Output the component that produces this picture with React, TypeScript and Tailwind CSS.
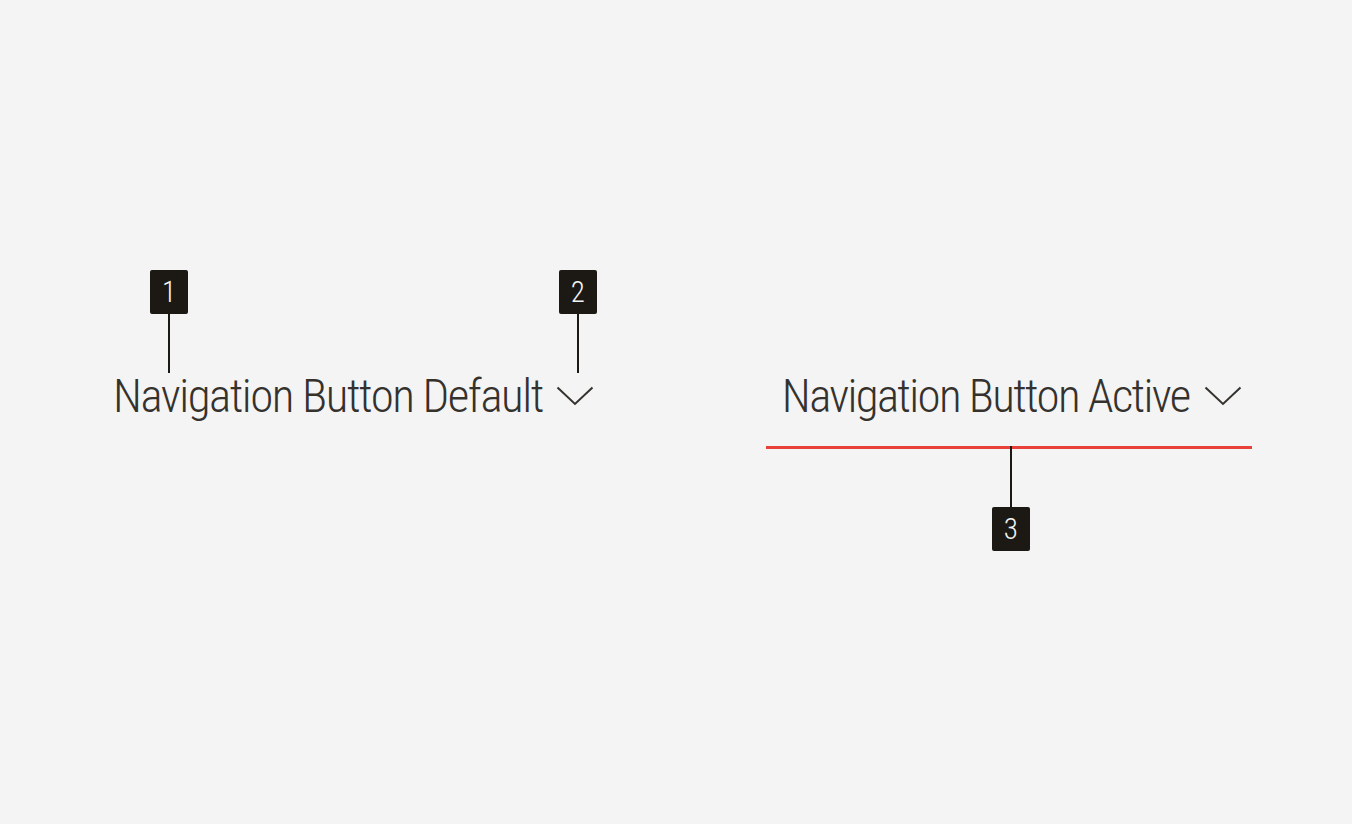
type MarkerProps = { n: string; down?: boolean; lineH: number };

// Numbered callout: dark square tag joined to the element by a thin stem
function Marker({ n, down, lineH }: MarkerProps) {
  const tag = (
    <div className="w-[38px] h-[44px] rounded-[2px] bg-[#1c1915] text-[#f4f4f4] flex items-center justify-center text-[29px] leading-none font-light [font-stretch:75%]">
      {n}
    </div>
  );
  const stem = <div className="w-[2px] bg-[#1c1915]" style={{ height: lineH }} />;
  return (
    <div className="flex flex-col items-center">
      {down ? (
        <>
          {stem}
          {tag}
        </>
      ) : (
        <>
          {tag}
          {stem}
        </>
      )}
    </div>
  );
}

function Chevron() {
  return (
    <svg width="38" height="20" viewBox="0 0 38 20" fill="none" className="shrink-0">
      <polyline points="1.5,1.5 19,18 36.5,1.5" stroke="#35322e" strokeWidth="2" />
    </svg>
  );
}

export default function App() {
  return (
    <div className="w-[1352px] h-[824px] bg-[#f4f4f4] font-['Roboto',sans-serif] text-[#35322e]">
      <div className="flex items-start pt-[368px]">
        {/* Default state */}
        <div className="relative ml-[113px] flex items-center gap-[13px]">
          <span className="text-[47px] leading-[56px] font-light [font-stretch:75%] tracking-[-1.5px] whitespace-nowrap">
            Navigation Button Default
          </span>
          <Chevron />
          <div className="absolute top-[-98px] left-[37px]">
            <Marker n="1" lineH={59} />
          </div>
          <div className="absolute top-[-98px] right-[-3px]">
            <Marker n="2" lineH={59} />
          </div>
        </div>

        {/* Active state */}
        <div className="relative ml-[172px] flex items-center gap-[15px] pl-[16px] pr-[10px] pb-[22px] border-b-[3px] border-[#e8413a]">
          <span className="text-[47px] leading-[56px] font-light [font-stretch:75%] tracking-[-1.7px] whitespace-nowrap">
            Navigation Button Active
          </span>
          <Chevron />
          <div className="absolute top-full left-[226px]">
            <Marker n="3" down lineH={61} />
          </div>
        </div>
      </div>
    </div>
  );
}
